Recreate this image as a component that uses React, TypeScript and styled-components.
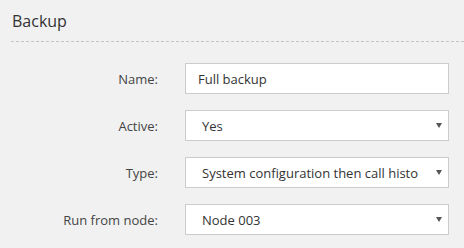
import styled, { createGlobalStyle } from 'styled-components';

const GlobalStyle = createGlobalStyle`
  html, body {
    margin: 0;
    padding: 0;
    background: #f1f1f1;
  }
  body {
    font-family: "Open Sans", "Liberation Sans", sans-serif;
    color: #333;
  }
`;

const Page = styled.div`
  width: 464px;
  height: 248px;
  overflow: hidden;
  background: #f1f1f1;
`;

const Header = styled.div`
  margin-left: 11px;
  padding: 10px 0 9px 1px;
  border-bottom: 1px dashed #c4c4c4;
`;

const Title = styled.h2`
  margin: 0;
  font-size: 16px;
  line-height: 22px;
  font-weight: 400;
  color: #333;
`;

const Form = styled.div`
  display: grid;
  grid-template-columns: 158px 264px;
  column-gap: 27px;
  row-gap: 16px;
  align-items: center;
  margin-top: 21px;
`;

const Label = styled.label`
  text-align: right;
  font-size: 13px;
  color: #444;
`;

const TextInput = styled.input`
  box-sizing: border-box;
  width: 100%;
  height: 31px;
  margin: 0;
  padding: 0 12px;
  border: 1px solid #cccccc;
  background: #fff;
  font-family: "Open Sans", "Liberation Sans", sans-serif;
  font-size: 13px;
  color: #333;
  outline: none;
`;

const SelectWrap = styled.div`
  position: relative;
  height: 31px;
`;

const Select = styled.select`
  appearance: none;
  box-sizing: border-box;
  width: 100%;
  height: 31px;
  margin: 0;
  padding: 0 30px 0 16px;
  border: 1px solid #cccccc;
  border-radius: 0;
  background: #fff;
  font-family: "Open Sans", "Liberation Sans", sans-serif;
  font-size: 13px;
  color: #333;
  outline: none;
`;

const Arrow = styled.span`
  position: absolute;
  right: 7px;
  top: 13px;
  width: 0;
  height: 0;
  border-left: 3px solid transparent;
  border-right: 3px solid transparent;
  border-top: 5px solid #555;
  pointer-events: none;
`;

interface SelectFieldProps {
  value: string;
}

const SelectField = ({ value }: SelectFieldProps) => (
  <SelectWrap>
    <Select value={value} onChange={() => {}}>
      <option value={value}>{value}</option>
    </Select>
    <Arrow />
  </SelectWrap>
);

const App = () => {
  return (
    <Page>
      <GlobalStyle />
      <Header>
        <Title>Backup</Title>
      </Header>
      <Form>
        <Label>Name:</Label>
        <TextInput value="Full backup" readOnly />
        <Label>Active:</Label>
        <SelectField value="Yes" />
        <Label>Type:</Label>
        <SelectField value="System configuration then call history" />
        <Label>Run from node:</Label>
        <SelectField value="Node 003" />
      </Form>
    </Page>
  );
};

export default App;
